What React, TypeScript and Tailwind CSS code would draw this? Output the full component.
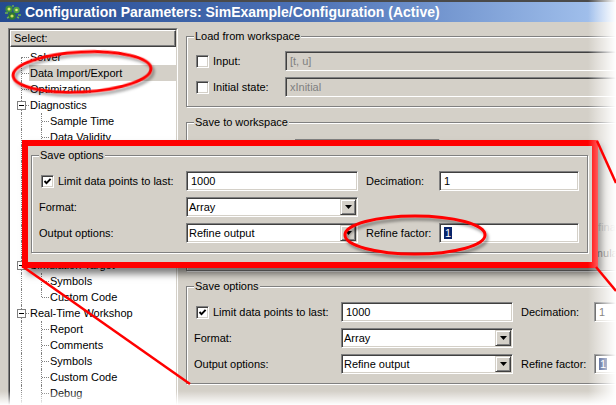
import React from "react";

type TreeNode = {
  label: string;
  level: 0 | 1;
  open?: boolean;
  last?: boolean;
  selected?: boolean;
};

const tree: TreeNode[] = [
  { label: "Solver", level: 0 },
  { label: "Data Import/Export", level: 0, selected: true },
  { label: "Optimization", level: 0 },
  { label: "Diagnostics", level: 0, open: true },
  { label: "Sample Time", level: 1 },
  { label: "Data Validity", level: 1 },
  { label: "Type Conversion", level: 1 },
  { label: "Connectivity", level: 1 },
  { label: "Compatibility", level: 1 },
  { label: "Model Referencing", level: 1 },
  { label: "Saving", level: 1, last: true },
  { label: "Hardware Implementation", level: 0 },
  { label: "Model Referencing", level: 0 },
  { label: "Simulation Target", level: 0, open: true },
  { label: "Symbols", level: 1 },
  { label: "Custom Code", level: 1, last: true },
  { label: "Real-Time Workshop", level: 0, open: true },
  { label: "Report", level: 1 },
  { label: "Comments", level: 1 },
  { label: "Symbols", level: 1 },
  { label: "Custom Code", level: 1 },
  { label: "Debug", level: 1 },
  { label: "Interface", level: 1 },
];

function TreeRow({ node, first }: { node: TreeNode; first: boolean }) {
  return (
    <div className="flex h-[16px] shrink-0">
      <div className="relative w-[19px] shrink-0">
        <span
          className={`absolute bottom-0 left-[11px] border-l border-dotted border-[#808080] ${
            first ? "top-[8px]" : "top-0"
          }`}
        />
        {node.level === 0 && (
          <span className="absolute left-[12px] top-[8px] w-[7px] border-t border-dotted border-[#808080]" />
        )}
        {node.open && (
          <span className="absolute left-[7px] top-[4px] flex h-[9px] w-[9px] items-center justify-center border border-[#808080] bg-white">
            <span className="h-px w-[5px] bg-black" />
          </span>
        )}
      </div>
      {node.level === 1 && (
        <div className="relative w-[20px] shrink-0">
          <span
            className={`absolute left-[12px] top-0 border-l border-dotted border-[#808080] ${
              node.last ? "h-[8px]" : "bottom-0"
            }`}
          />
          <span className="absolute left-[13px] top-[8px] w-[7px] border-t border-dotted border-[#808080]" />
        </div>
      )}
      <div className={`flex-1 whitespace-nowrap pl-px leading-[16px] ${node.selected ? "bg-[#d4d0c8]" : ""}`}>
        {node.label}
      </div>
    </div>
  );
}

function Check({ checked }: { checked?: boolean }) {
  return (
    <span className="flex h-[13px] w-[13px] shrink-0 items-center justify-center border border-t-[#808080] border-l-[#808080] border-r-white border-b-white bg-white shadow-[inset_1px_1px_0_#404040,inset_-1px_-1px_0_#d4d0c8]">
      {checked && (
        <svg width="9" height="9" viewBox="0 0 9 9">
          <path d="M1.5 4 L3.5 6.2 L7.6 1.8" fill="none" stroke="#000" strokeWidth="1.9" />
        </svg>
      )}
    </span>
  );
}

function Field({
  children,
  className = "",
  disabled,
  dropdown,
}: {
  children?: React.ReactNode;
  className?: string;
  disabled?: boolean;
  dropdown?: boolean;
}) {
  return (
    <div
      className={`flex h-[20px] shrink-0 items-center border border-t-[#808080] border-l-[#808080] border-r-white border-b-white shadow-[inset_1px_1px_0_#404040,inset_-1px_-1px_0_#d4d0c8] ${
        disabled ? "bg-[#d4d0c8] text-[#808080]" : "bg-white"
      } ${className}`}
    >
      <span className={`flex-1 whitespace-nowrap ${dropdown ? "pl-[2px]" : "pl-[4px]"}`}>{children}</span>
      {dropdown && (
        <span className="mr-px flex h-[16px] w-[16px] items-center justify-center border border-t-[#d4d0c8] border-l-[#d4d0c8] border-r-[#404040] border-b-[#404040] bg-[#d4d0c8] shadow-[inset_1px_1px_0_#fff,inset_-1px_-1px_0_#808080]">
          <svg width="7" height="4" viewBox="0 0 7 4">
            <path d="M0 0h7L3.5 4z" fill="#000" />
          </svg>
        </span>
      )}
    </div>
  );
}

function Group({
  title,
  className = "",
  children,
}: {
  title: string;
  className?: string;
  children: React.ReactNode;
}) {
  return (
    <fieldset
      className={`w-[557px] shrink-0 border border-[#808080] px-[7px] shadow-[inset_1px_1px_0_#fff,1px_1px_0_#fff] ${className}`}
    >
      <legend className="bg-[#d4d0c8] px-px leading-[13px]">{title}</legend>
      {children}
    </fieldset>
  );
}

function SaveOptions({ className = "" }: { className?: string }) {
  return (
    <Group title="Save options" className={`pb-[9px] pt-[9px] ${className}`}>
      <div className="flex flex-col gap-[6px]">
        <div className="flex h-[20px] items-center">
          <div className="flex w-[147px] shrink-0 items-center pl-[2px]">
            <Check checked />
            <span className="ml-[4px] whitespace-nowrap">Limit data points to last:</span>
          </div>
          <Field className="w-[172px]">1000</Field>
          <span className="ml-[8px] w-[73px] shrink-0">Decimation:</span>
          <Field className="w-[140px]">1</Field>
        </div>
        <div className="flex h-[20px] items-center">
          <span className="w-[147px] shrink-0">Format:</span>
          <Field className="w-[172px]" dropdown>
            Array
          </Field>
        </div>
        <div className="flex h-[20px] items-center">
          <span className="w-[147px] shrink-0">Output options:</span>
          <Field className="w-[172px]" dropdown>
            Refine output
          </Field>
          <span className="ml-[8px] w-[73px] shrink-0 whitespace-nowrap">Refine factor:</span>
          <Field className="w-[140px]">
            <span className="bg-[#0a246a] px-px text-white">1</span>
          </Field>
        </div>
      </div>
    </Group>
  );
}

function WsRow({
  label,
  value,
  checked,
  disabled,
  right,
  rightDisabled,
}: {
  label: string;
  value: string;
  checked?: boolean;
  disabled?: boolean;
  right?: string;
  rightDisabled?: boolean;
}) {
  return (
    <div className="flex h-[20px] items-center">
      <div className="flex w-[101px] shrink-0 items-center pl-[2px]">
        <Check checked={checked} />
        <span className="ml-[4px] whitespace-nowrap">{label}</span>
      </div>
      <Field className="w-[145px]" disabled={disabled}>
        {value}
      </Field>
      {right && (
        <div className="ml-[6px] flex items-center">
          <Check />
          <span className={`ml-[4px] whitespace-nowrap ${rightDisabled ? "text-[#808080]" : ""}`}>{right}</span>
        </div>
      )}
    </div>
  );
}

function AppIcon() {
  return (
    <svg width="18" height="17" viewBox="0 0 18 17">
      <circle cx="5" cy="5" r="3.6" fill="#3f8f3a" />
      <circle cx="5" cy="5" r="1.5" fill="#d8e86a" />
      <circle cx="12.5" cy="6" r="3.2" fill="#4ea043" />
      <circle cx="12.5" cy="6" r="1.3" fill="#e6f07a" />
      <circle cx="8" cy="12" r="3.8" fill="#2f7a2e" />
      <circle cx="8" cy="12" r="1.6" fill="#cfe25e" />
      <path d="M1 9h3M14 11h3M9 1v2M3 14l2-1M15 14l-2-1" stroke="#6fb24f" strokeWidth="1.4" />
    </svg>
  );
}

export default function App() {
  return (
    <div className="relative h-[405px] w-[616px] overflow-hidden bg-white font-['Liberation_Sans',Arial,sans-serif] text-[11px] leading-[13px] text-black">
      <div className="flex h-full flex-col shadow-[inset_1px_0_0_#808080]">
        {/* title bar */}
        <div className="flex h-[22px] shrink-0 items-center border-t-2 border-[#4a4a4a] bg-linear-to-r from-[#244a90] via-[#4d72b6] to-[#a8c6f0] pl-[4px]">
          <AppIcon />
          <span className="ml-[3px] whitespace-nowrap text-[14px] font-bold leading-none text-white">
            Configuration Parameters: SimExample/Configuration (Active)
          </span>
        </div>

        <div className="flex min-h-0 flex-1 bg-[#d4d0c8]">
          {/* tree */}
          <div className="flex w-[178px] shrink-0 flex-col pl-[8px] pt-[6px]">
            <div className="flex flex-1 flex-col border border-t-[#808080] border-l-[#808080] border-r-white border-b-white">
              <div className="flex flex-1 flex-col overflow-hidden border border-t-[#404040] border-l-[#404040] border-r-[#d4d0c8] border-b-[#d4d0c8] bg-white">
                <div className="h-[17px] shrink-0 border border-t-white border-l-white border-r-[#404040] border-b-[#404040] bg-[#d4d0c8] pl-[3px] leading-[15px] shadow-[inset_-1px_-1px_0_#808080]">
                  Select:
                </div>
                <div className="flex flex-col pt-[2px]">
                  {tree.map((n, i) => (
                    <TreeRow key={i} node={n} first={i === 0} />
                  ))}
                </div>
              </div>
            </div>
          </div>

          {/* right panel */}
          <div className="flex min-w-0 flex-1 flex-col items-start overflow-hidden pl-[8px] pt-[8px]">
            <Group title="Load from workspace" className="pb-[9px] pt-[8px]">
              <div className="flex flex-col gap-[6px]">
                <div className="flex h-[20px] items-center">
                  <div className="flex w-[91px] shrink-0 items-center pl-[2px]">
                    <Check />
                    <span className="ml-[4px]">Input:</span>
                  </div>
                  <Field className="w-[450px]" disabled>
                    [t, u]
                  </Field>
                </div>
                <div className="flex h-[20px] items-center">
                  <div className="flex w-[91px] shrink-0 items-center pl-[2px]">
                    <Check />
                    <span className="ml-[4px] whitespace-nowrap">Initial state:</span>
                  </div>
                  <Field className="w-[450px]" disabled>
                    xInitial
                  </Field>
                </div>
              </div>
            </Group>

            <Group title="Save to workspace" className="mt-[9px] pb-[7px] pt-[10px]">
              <div className="flex flex-col gap-[6px]">
                <WsRow label="Time:" value="tout" checked />
                <WsRow label="States:" value="xout" />
                <WsRow label="Output:" value="yout" checked />
                <WsRow
                  label="Final states:"
                  value="xFinal"
                  disabled
                  right="Save complete SimState in final state"
                  rightDisabled
                />
                <WsRow
                  label="Signal logging:"
                  value="logsout"
                  checked
                  right="Inspect signal logs when simulation is paused/stopped"
                />
              </div>
            </Group>

            <SaveOptions className="mt-[9px]" />
          </div>
        </div>
      </div>

      {/* magnified callout */}
      <div className="absolute left-[22px] top-[140px] h-[128px] w-[576px] border-[6px] border-[#ff0000] bg-[#d4d0c8] pl-[3px] pt-[3px] shadow-[5px_6px_7px_rgba(0,0,0,0.5)]">
        <SaveOptions />
      </div>

      {/* torn-edge fades */}
      <div className="pointer-events-none absolute right-0 top-0 h-full w-[28px] bg-linear-to-r from-transparent to-white" />
      <div className="pointer-events-none absolute bottom-0 left-0 h-[14px] w-full bg-linear-to-b from-transparent to-white" />

      {/* annotations */}
      <svg className="pointer-events-none absolute inset-0" width="616" height="405">
        <defs>
          <filter id="sh" x="-20%" y="-40%" width="140%" height="190%">
            <feDropShadow dx="2" dy="3" stdDeviation="1.6" floodColor="#000" floodOpacity="0.4" />
          </filter>
        </defs>
        <ellipse
          cx="82"
          cy="72"
          rx="69"
          ry="20"
          transform="rotate(-3 82 72)"
          fill="none"
          stroke="#ff0000"
          strokeWidth="3"
          filter="url(#sh)"
        />
        <ellipse cx="415" cy="235" rx="70" ry="19" fill="none" stroke="#ff0000" strokeWidth="3" filter="url(#sh)" />
        <line x1="22" y1="266" x2="190" y2="384" stroke="#ff0000" strokeWidth="2.5" />
        <line x1="597" y1="141" x2="616" y2="183" stroke="#ff0000" strokeWidth="2.5" />
        <line x1="596" y1="267" x2="616" y2="291" stroke="#ff0000" strokeWidth="2.5" />
      </svg>
    </div>
  );
}
